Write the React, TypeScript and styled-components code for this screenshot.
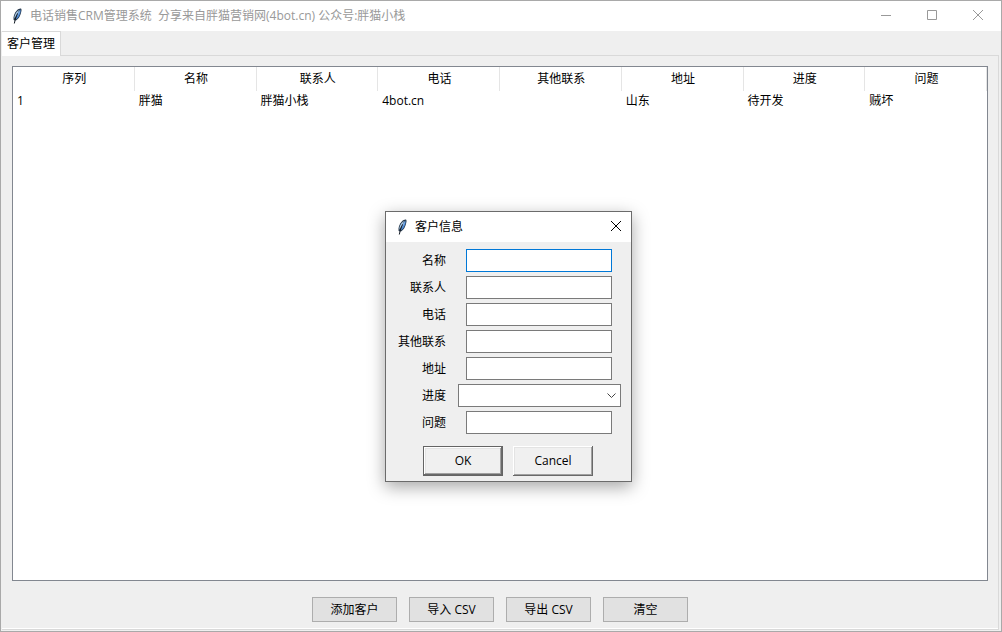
import React from "react";
import styled, { createGlobalStyle } from "styled-components";

const GlobalStyle = createGlobalStyle`
  *, *::before, *::after { box-sizing: border-box; }
  body {
    margin: 0;
    background: #efefef;
    color: #000;
    font: 12px/16px "Open Sans", "Noto Sans CJK SC", sans-serif;
  }
  button, input, select { font: inherit; color: inherit; margin: 0; }
`;

const AppWindow = styled.div`
  position: relative;
  display: flex;
  flex-direction: column;
  min-height: 100vh;
  border: 1px solid #a9a9a9;
  background: #efefef;
`;

const TitleBar = styled.header<{ $active?: boolean }>`
  display: flex;
  align-items: center;
  height: 30px;
  padding-left: 8px;
  background: #fff;
  color: ${(p) => (p.$active ? "#000" : "#999")};
`;

const Title = styled.h1`
  flex: 1;
  margin: 0;
  padding-left: 5px;
  font-size: 12px;
  font-weight: 400;
  white-space: pre;
`;

const CaptionButton = styled.button<{ $width: number }>`
  display: flex;
  align-items: center;
  justify-content: center;
  width: ${(p) => p.$width}px;
  height: 30px;
  padding: 0 0 2px;
  border: 0;
  background: none;
`;

const TabStrip = styled.div`
  display: flex;
  align-items: flex-end;
  height: 25px;
  margin: 0 2px 0 1px;
  border-bottom: 1px solid #d9d9d9;
`;

const Tab = styled.button`
  height: 25px;
  margin-bottom: -1px;
  padding: 0 5px;
  border: 1px solid #d9d9d9;
  border-width: 1px 1px 0 0;
  background: #fff;
`;

const Page = styled.main`
  flex: 1;
  display: flex;
  flex-direction: column;
  margin: 0 2px 1px 1px;
  padding: 10px;
  padding-bottom: 5px;
  border-right: 1px solid #d9d9d9;
  border-bottom: 1px solid #d9d9d9;
  box-shadow: inset 0 -1px #fff;
`;

const ListFrame = styled.div`
  flex: 1;
  border: 1px solid #828790;
  background: #fff;
`;

const CustomerTable = styled.table`
  width: 100%;
  table-layout: fixed;
  border-collapse: separate;
  border-spacing: 0;
`;

const HeadCell = styled.th`
  height: 24px;
  padding: 0 0 0 2px;
  border-right: 1px solid #e5e5e5;
  font-weight: 400;
  text-align: center;
`;

const Cell = styled.td`
  height: 20px;
  padding: 0 4px;
`;

const Actions = styled.div`
  display: flex;
  justify-content: center;
  gap: 12px;
  padding: 16px 0 2px;
`;

const ActionButton = styled.button`
  width: 85px;
  height: 25px;
  padding: 0;
  border: 1px solid #adadad;
  background: #e1e1e1;
`;

const DialogWindow = styled.section`
  position: absolute;
  left: 384px;
  top: 210px;
  width: 247px;
  border: 1px solid #6b6b6b;
  background: #efefef;
  box-shadow: 0 5px 16px rgba(0, 0, 0, 0.35);
`;

const Fields = styled.div`
  display: grid;
  grid-template-columns: 60px 1fr;
  column-gap: 12px;
  row-gap: 4px;
  align-items: center;
  padding: 7px 10px 0 0;
`;

const Label = styled.label`
  text-align: right;
`;

const Field = styled.input`
  width: 146px;
  height: 23px;
  && { margin-left: 8px; }
  padding: 0 4px;
  border: 1px solid #7a7a7a;
  border-radius: 0;
  outline: 0;
  background: #fff;
  &:focus {
    border-color: #0078d7;
  }
`;

const SelectBox = styled.div`
  position: relative;
  height: 23px;
`;

const Select = styled.select`
  display: block;
  width: 100%;
  height: 23px;
  padding: 0 20px 0 4px;
  border: 1px solid #7a7a7a;
  border-radius: 0;
  appearance: none;
  background: #fff;
`;

const Chevron = styled.svg`
  position: absolute;
  right: 5px;
  top: 9px;
  pointer-events: none;
`;

const DialogButtons = styled.div`
  display: flex;
  justify-content: center;
  gap: 10px;
  padding: 12px 0 5px 0;
  margin-right: 1px;
`;

const DialogButton = styled.button<{ $primary?: boolean }>`
  width: 80px;
  height: 30px;
  padding: 0;
  border: ${(p) => (p.$primary ? "1px solid #646464" : "0")};
  background: #f0f0f0;
  box-shadow: inset -1px -1px #696969, inset 1px 1px #fff,
    inset -2px -2px #a0a0a0, inset 2px 2px #e3e3e3;
`;

const Feather = () => (
  <svg width="16" height="16" viewBox="0 0 16 16" aria-hidden="true">
    <path d="M4.6 12C4 8.5 5.4 4.8 7.8 2.4C9.3 1 11.4 .2 12.2 .8C13 1.6 12.2 5 10.9 8C9.8 10.4 8 12.4 5.8 12.6Z" fill="#26384c" />
    <path d="M5.4 10.5C5 7.8 6.6 4.6 8.6 2.9L10.2 2L8 7Z" fill="#a9c6e0" />
    <path d="M6.6 11.2L9 5.4L11.5 1.4C12 3.5 11 6.2 9.9 8.2C9 9.9 8 10.8 6.6 11.2Z" fill="#4d88d2" />
    <path d="M8.8 5L11.2 1.5L10.6 4.4L8.3 8.4Z" fill="#7fb0ea" />
    <path d="M8.6 5.4L6.8 9.3L5.3 15.5" fill="none" stroke="#131b24" />
  </svg>
);

const MinimizeIcon = () => (
  <svg width="10" height="10" stroke="currentColor" aria-hidden="true">
    <path d="M0 5.5H10" />
  </svg>
);

const MaximizeIcon = () => (
  <svg width="10" height="10" fill="none" stroke="currentColor" aria-hidden="true">
    <path d="M.5 .5H9.5V9.5H.5Z" />
  </svg>
);

const CloseIcon = () => (
  <svg width="12" height="12" viewBox="0 0 12 12" fill="none" stroke="currentColor" aria-hidden="true">
    <path d="M1 1L11 11M11 1L1 11" />
  </svg>
);

const columns = ["序列", "名称", "联系人", "电话", "其他联系", "地址", "进度", "问题"];
const rows = [["1", "胖猫", "胖猫小栈", "4bot.cn", "", "山东", "待开发", "贼坏"]];
const actions = ["添加客户", "导入 CSV", "导出 CSV", "清空"];

export default function App() {
  return (
    <>
      <GlobalStyle />
      <AppWindow>
        <TitleBar>
          <Feather />
          <Title>电话销售CRM管理系统{"  "}分享来自胖猫营销网(4bot.cn) 公众号:胖猫小栈</Title>
          <CaptionButton $width={46} type="button" aria-label="Minimize"><MinimizeIcon /></CaptionButton>
          <CaptionButton $width={46} type="button" aria-label="Maximize"><MaximizeIcon /></CaptionButton>
          <CaptionButton $width={46} type="button" aria-label="Close"><CloseIcon /></CaptionButton>
        </TitleBar>
        <TabStrip role="tablist">
          <Tab type="button" role="tab" aria-selected="true">客户管理</Tab>
        </TabStrip>
        <Page>
          <ListFrame>
            <CustomerTable>
              <thead>
                <tr>{columns.map((c) => <HeadCell key={c} scope="col">{c}</HeadCell>)}</tr>
              </thead>
              <tbody>
                {rows.map((r) => (
                  <tr key={r[0]}>{r.map((v, i) => <Cell key={columns[i]}>{v}</Cell>)}</tr>
                ))}
              </tbody>
            </CustomerTable>
          </ListFrame>
          <Actions>
            {actions.map((a) => <ActionButton key={a} type="button">{a}</ActionButton>)}
          </Actions>
        </Page>
        <DialogWindow role="dialog" aria-labelledby="dialog-title">
          <TitleBar $active>
            <Feather />
            <Title as="h2" id="dialog-title">客户信息</Title>
            <CaptionButton $width={30} type="button" aria-label="Close"><CloseIcon /></CaptionButton>
          </TitleBar>
          <form onSubmit={(e) => e.preventDefault()}>
            <Fields>
              {columns.slice(1).map((name, i) => (
                <React.Fragment key={name}>
                  <Label htmlFor={`field-${i}`}>{name}</Label>
                  {name === "进度" ? (
                    <SelectBox>
                      <Select id={`field-${i}`} defaultValue="">
                        <option value=""></option>
                        <option>待开发</option>
                      </Select>
                      <Chevron width="9" height="6" viewBox="0 0 9 6" fill="none" stroke="#444">
                        <path d="M.5 .5L4.5 4.5L8.5 .5" />
                      </Chevron>
                    </SelectBox>
                  ) : (
                    <Field id={`field-${i}`} type="text" autoFocus={i === 0} />
                  )}
                </React.Fragment>
              ))}
            </Fields>
            <DialogButtons>
              <DialogButton $primary type="submit">OK</DialogButton>
              <DialogButton type="button">Cancel</DialogButton>
            </DialogButtons>
          </form>
        </DialogWindow>
      </AppWindow>
    </>
  );
}
